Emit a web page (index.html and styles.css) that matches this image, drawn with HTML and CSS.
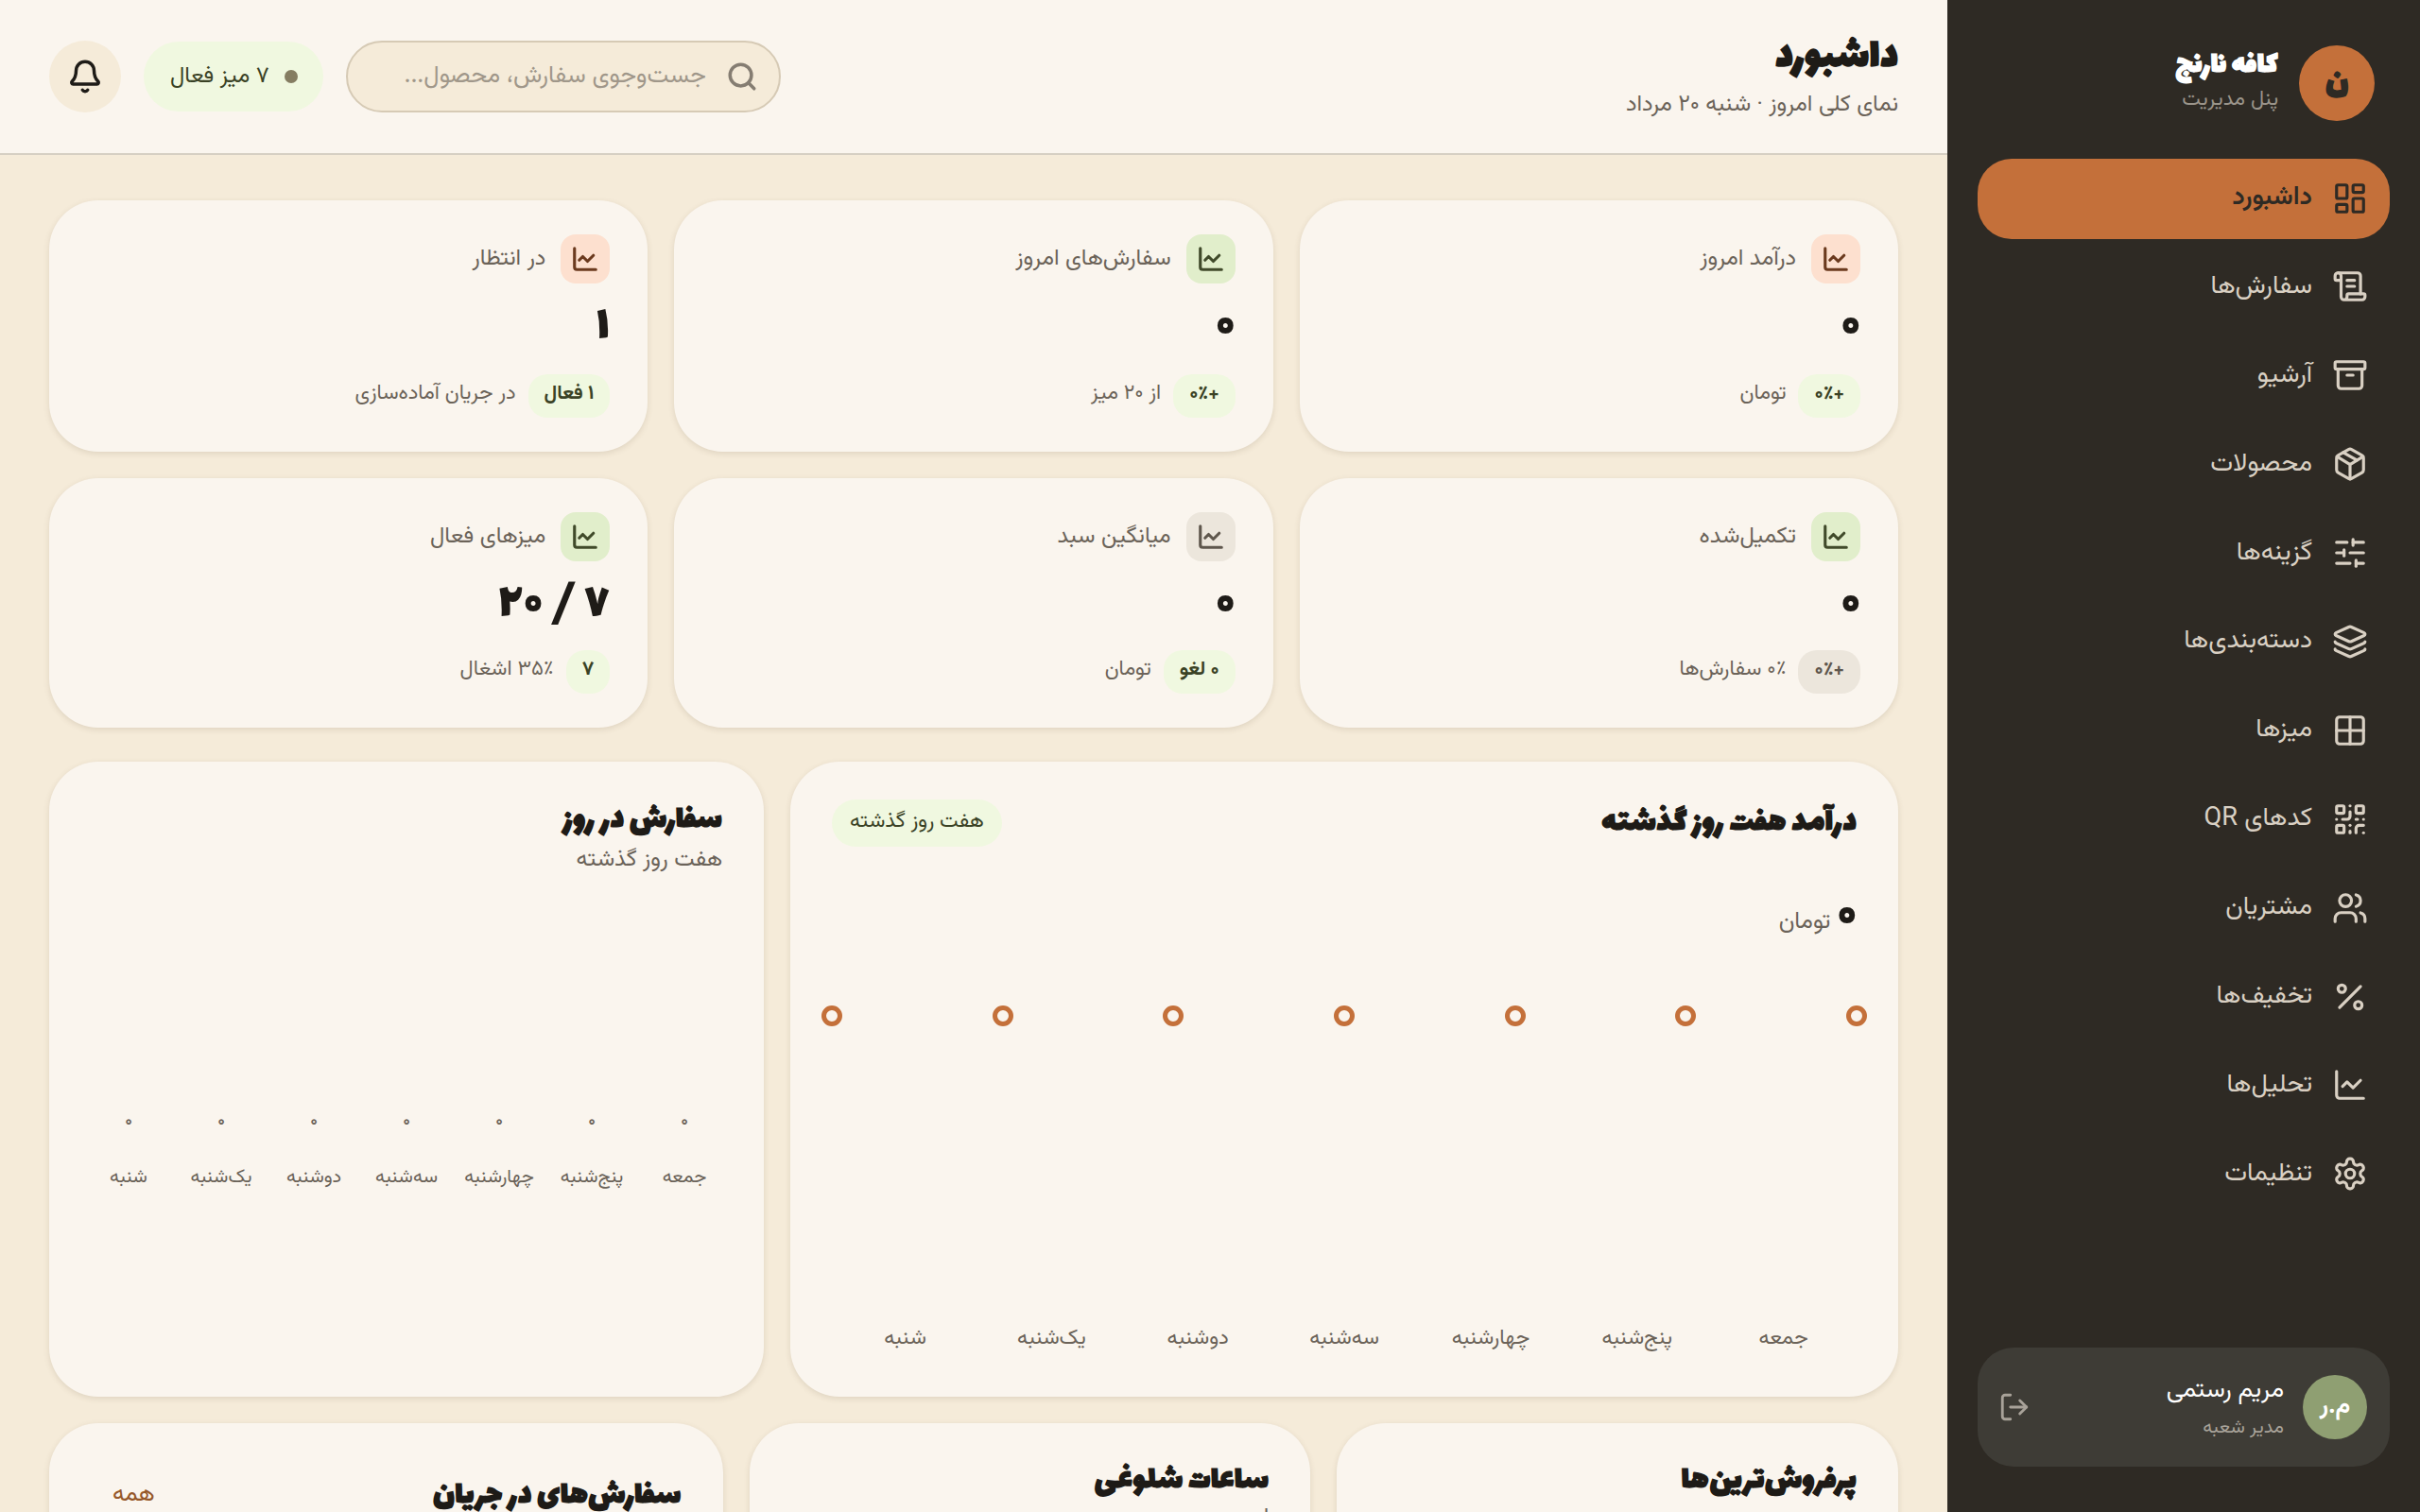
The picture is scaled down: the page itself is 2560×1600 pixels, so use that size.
FILE: index.html
```html
<!DOCTYPE html>
<html lang="fa" dir="rtl">
<head>
<meta charset="utf-8">
<title>داشبورد</title>
<link rel="stylesheet" href="styles.css">
</head>
<body>
<svg class="sprite" aria-hidden="true">
<symbol id="i-dash" viewBox="0 0 24 24"><rect x="3" y="3" width="7" height="9" rx="1"/><rect x="14" y="3" width="7" height="5" rx="1"/><rect x="14" y="12" width="7" height="9" rx="1"/><rect x="3" y="16" width="7" height="5" rx="1"/></symbol>
<symbol id="i-scroll" viewBox="0 0 24 24"><path d="M15 12h-5"/><path d="M15 8h-5"/><path d="M19 17V5a2 2 0 0 0-2-2H4"/><path d="M8 21h12a2 2 0 0 0 2-2v-1a1 1 0 0 0-1-1H11a1 1 0 0 0-1 1v1a2 2 0 1 1-4 0V5a2 2 0 1 0-4 0v2a1 1 0 0 0 1 1h3"/></symbol>
<symbol id="i-archive" viewBox="0 0 24 24"><rect x="2" y="3" width="20" height="5" rx="1"/><path d="M4 8v11a2 2 0 0 0 2 2h12a2 2 0 0 0 2-2V8"/><path d="M10 12h4"/></symbol>
<symbol id="i-package" viewBox="0 0 24 24"><path d="M11 21.73a2 2 0 0 0 2 0l7-4A2 2 0 0 0 21 16V8a2 2 0 0 0-1-1.73l-7-4a2 2 0 0 0-2 0l-7 4A2 2 0 0 0 3 8v8a2 2 0 0 0 1 1.73z"/><path d="M12 22V12"/><path d="m3.3 7 7.703 4.734a2 2 0 0 0 1.994 0L20.7 7"/><path d="m7.5 4.27 9 5.15"/></symbol>
<symbol id="i-sliders" viewBox="0 0 24 24"><path d="M10 5H3"/><path d="M12 19H3"/><path d="M14 3v4"/><path d="M16 17v4"/><path d="M21 12h-9"/><path d="M21 19h-5"/><path d="M21 5h-7"/><path d="M8 10v4"/><path d="M8 12H3"/></symbol>
<symbol id="i-layers" viewBox="0 0 24 24"><path d="M12.83 2.18a2 2 0 0 0-1.66 0L2.6 6.08a1 1 0 0 0 0 1.83l8.58 3.91a2 2 0 0 0 1.66 0l8.58-3.9a1 1 0 0 0 0-1.83z"/><path d="M2 12a1 1 0 0 0 .58.91l8.6 3.91a2 2 0 0 0 1.65 0l8.58-3.9A1 1 0 0 0 22 12"/><path d="M2 17a1 1 0 0 0 .58.91l8.6 3.91a2 2 0 0 0 1.65 0l8.58-3.9A1 1 0 0 0 22 17"/></symbol>
<symbol id="i-grid" viewBox="0 0 24 24"><path d="M12 3v18"/><path d="M3 12h18"/><rect x="3" y="3" width="18" height="18" rx="2"/></symbol>
<symbol id="i-qr" viewBox="0 0 24 24"><rect x="3" y="3" width="5" height="5" rx="1"/><rect x="16" y="3" width="5" height="5" rx="1"/><rect x="3" y="16" width="5" height="5" rx="1"/><path d="M21 16h-3a2 2 0 0 0-2 2v3"/><path d="M21 21v.01"/><path d="M12 7v3a2 2 0 0 1-2 2H7"/><path d="M3 12h.01"/><path d="M12 3h.01"/><path d="M12 16v.01"/><path d="M16 12h1"/><path d="M21 12v.01"/><path d="M12 21v-1"/></symbol>
<symbol id="i-users" viewBox="0 0 24 24"><path d="M16 21v-2a4 4 0 0 0-4-4H6a4 4 0 0 0-4 4v2"/><circle cx="9" cy="7" r="4"/><path d="M22 21v-2a4 4 0 0 0-3-3.87"/><path d="M16 3.13a4 4 0 0 1 0 7.75"/></symbol>
<symbol id="i-percent" viewBox="0 0 24 24"><path d="M19 5 5 19"/><circle cx="6.5" cy="6.5" r="2.5"/><circle cx="17.5" cy="17.5" r="2.5"/></symbol>
<symbol id="i-chart" viewBox="0 0 24 24"><path d="M3 3v16a2 2 0 0 0 2 2h16"/><path d="m19 9-5 5-4-4-3 3"/></symbol>
<symbol id="i-gear" viewBox="0 0 24 24"><path d="M12.22 2h-.44a2 2 0 0 0-2 2v.18a2 2 0 0 1-1 1.73l-.43.25a2 2 0 0 1-2 0l-.15-.08a2 2 0 0 0-2.73.73l-.22.38a2 2 0 0 0 .73 2.73l.15.1a2 2 0 0 1 1 1.72v.51a2 2 0 0 1-1 1.74l-.15.09a2 2 0 0 0-.73 2.73l.22.38a2 2 0 0 0 2.73.73l.15-.08a2 2 0 0 1 2 0l.43.25a2 2 0 0 1 1 1.73V20a2 2 0 0 0 2 2h.44a2 2 0 0 0 2-2v-.18a2 2 0 0 1 1-1.73l.43-.25a2 2 0 0 1 2 0l.15.08a2 2 0 0 0 2.73-.73l.22-.39a2 2 0 0 0-.73-2.73l-.15-.08a2 2 0 0 1-1-1.74v-.5a2 2 0 0 1 1-1.74l.15-.09a2 2 0 0 0 .73-2.73l-.22-.38a2 2 0 0 0-2.73-.73l-.15.08a2 2 0 0 1-2 0l-.43-.25a2 2 0 0 1-1-1.73V4a2 2 0 0 0-2-2z"/><circle cx="12" cy="12" r="3"/></symbol>
<symbol id="i-logout" viewBox="0 0 24 24"><path d="M9 21H5a2 2 0 0 1-2-2V5a2 2 0 0 1 2-2h4"/><path d="m16 17 5-5-5-5"/><path d="M21 12H9"/></symbol>
<symbol id="i-bell" viewBox="0 0 24 24"><path d="M10.268 21a2 2 0 0 0 3.464 0"/><path d="M3.262 15.326A1 1 0 0 0 4 17h16a1 1 0 0 0 .74-1.673C19.41 13.956 18 12.499 18 8A6 6 0 0 0 6 8c0 4.499-1.411 5.956-2.738 7.326"/></symbol>
<symbol id="i-search" viewBox="0 0 24 24"><path d="m21 21-4.34-4.34"/><circle cx="11" cy="11" r="8"/></symbol>
</svg>

<aside class="sidebar">
  <div class="brand">
    <div class="brand-logo">ن</div>
    <div class="brand-text">
      <div class="brand-name">کافه نارنج</div>
      <div class="brand-sub">پنل مدیریت</div>
    </div>
  </div>
  <nav class="nav">
    <a class="nav-item active"><svg class="icon nav-icon"><use href="#i-dash"/></svg><span>داشبورد</span></a>
    <a class="nav-item"><svg class="icon nav-icon"><use href="#i-scroll"/></svg><span>سفارش‌ها</span></a>
    <a class="nav-item"><svg class="icon nav-icon"><use href="#i-archive"/></svg><span>آرشیو</span></a>
    <a class="nav-item"><svg class="icon nav-icon"><use href="#i-package"/></svg><span>محصولات</span></a>
    <a class="nav-item"><svg class="icon nav-icon"><use href="#i-sliders"/></svg><span>گزینه‌ها</span></a>
    <a class="nav-item"><svg class="icon nav-icon"><use href="#i-layers"/></svg><span>دسته‌بندی‌ها</span></a>
    <a class="nav-item"><svg class="icon nav-icon"><use href="#i-grid"/></svg><span>میزها</span></a>
    <a class="nav-item"><svg class="icon nav-icon"><use href="#i-qr"/></svg><span>کدهای QR</span></a>
    <a class="nav-item"><svg class="icon nav-icon"><use href="#i-users"/></svg><span>مشتریان</span></a>
    <a class="nav-item"><svg class="icon nav-icon"><use href="#i-percent"/></svg><span>تخفیف‌ها</span></a>
    <a class="nav-item"><svg class="icon nav-icon"><use href="#i-chart"/></svg><span>تحلیل‌ها</span></a>
    <a class="nav-item"><svg class="icon nav-icon"><use href="#i-gear"/></svg><span>تنظیمات</span></a>
  </nav>
  <div class="user">
    <div class="user-avatar">م.ر</div>
    <div class="user-text">
      <div class="user-name">مریم رستمی</div>
      <div class="user-role">مدیر شعبه</div>
    </div>
    <svg class="icon user-logout"><use href="#i-logout"/></svg>
  </div>
</aside>

<div class="main">
  <header class="topbar">
    <div class="topbar-title">
      <h1>داشبورد</h1>
      <p>نمای کلی امروز · شنبه ۲۰ مرداد</p>
    </div>
    <div class="topbar-tools">
      <div class="search"><svg class="icon search-icon"><use href="#i-search"/></svg><span>جست‌وجوی سفارش، محصول...</span></div>
      <div class="live-pill"><i class="live-dot"></i><span>۷ میز فعال</span></div>
      <div class="bell"><svg class="icon bell-icon"><use href="#i-bell"/></svg></div>
    </div>
  </header>

  <div class="content">
    <section class="kpis">
      <article class="card kpi">
        <div class="kpi-head"><span class="kpi-icon peach"><svg class="icon"><use href="#i-chart"/></svg></span><span>درآمد امروز</span></div>
        <div class="kpi-value">۰</div>
        <div class="kpi-foot"><span class="badge">+۰٪</span><span class="kpi-note">تومان</span></div>
      </article>
      <article class="card kpi">
        <div class="kpi-head"><span class="kpi-icon green"><svg class="icon"><use href="#i-chart"/></svg></span><span>سفارش‌های امروز</span></div>
        <div class="kpi-value">۰</div>
        <div class="kpi-foot"><span class="badge">+۰٪</span><span class="kpi-note">از ۲۰ میز</span></div>
      </article>
      <article class="card kpi">
        <div class="kpi-head"><span class="kpi-icon peach"><svg class="icon"><use href="#i-chart"/></svg></span><span>در انتظار</span></div>
        <div class="kpi-value">۱</div>
        <div class="kpi-foot"><span class="badge">۱ فعال</span><span class="kpi-note">در جریان آماده‌سازی</span></div>
      </article>
      <article class="card kpi">
        <div class="kpi-head"><span class="kpi-icon green"><svg class="icon"><use href="#i-chart"/></svg></span><span>تکمیل‌شده</span></div>
        <div class="kpi-value">۰</div>
        <div class="kpi-foot"><span class="badge muted">+۰٪</span><span class="kpi-note">۰٪ سفارش‌ها</span></div>
      </article>
      <article class="card kpi">
        <div class="kpi-head"><span class="kpi-icon gray"><svg class="icon"><use href="#i-chart"/></svg></span><span>میانگین سبد</span></div>
        <div class="kpi-value">۰</div>
        <div class="kpi-foot"><span class="badge">۰ لغو</span><span class="kpi-note">تومان</span></div>
      </article>
      <article class="card kpi">
        <div class="kpi-head"><span class="kpi-icon green"><svg class="icon"><use href="#i-chart"/></svg></span><span>میزهای فعال</span></div>
        <div class="kpi-value">۷ / ۲۰</div>
        <div class="kpi-foot"><span class="badge">۷</span><span class="kpi-note">۳۵٪ اشغال</span></div>
      </article>
    </section>

    <section class="charts">
      <article class="card chart revenue">
        <div class="chart-head">
          <h2>درآمد هفت روز گذشته</h2>
          <span class="range-pill">هفت روز گذشته</span>
        </div>
        <div class="revenue-total"><b>۰</b><span>تومان</span></div>
        <div class="dots"><i></i><i></i><i></i><i></i><i></i><i></i><i></i></div>
        <div class="rev-days"><span>جمعه</span><span>پنج‌شنبه</span><span>چهارشنبه</span><span>سه‌شنبه</span><span>دوشنبه</span><span>یک‌شنبه</span><span>شنبه</span></div>
      </article>
      <article class="card chart orders">
        <h2>سفارش در روز</h2>
        <p class="chart-sub">هفت روز گذشته</p>
        <div class="bars">
          <div class="bar"><small>۰</small><span>جمعه</span></div>
          <div class="bar"><small>۰</small><span>پنج‌شنبه</span></div>
          <div class="bar"><small>۰</small><span>چهارشنبه</span></div>
          <div class="bar"><small>۰</small><span>سه‌شنبه</span></div>
          <div class="bar"><small>۰</small><span>دوشنبه</span></div>
          <div class="bar"><small>۰</small><span>یک‌شنبه</span></div>
          <div class="bar"><small>۰</small><span>شنبه</span></div>
        </div>
      </article>
    </section>

    <section class="lower">
      <article class="card panel">
        <h2>پرفروش‌ترین‌ها</h2>
      </article>
      <article class="card panel">
        <h2>ساعات شلوغی</h2>
        <p class="panel-sub">امروز</p>
      </article>
      <article class="card panel panel-live">
        <div class="panel-head"><h2>سفارش‌های در جریان</h2><a class="panel-link">همه</a></div>
      </article>
    </section>
  </div>
</div>
</body>
</html>
```

FILE: styles.css
```css
* { box-sizing: border-box; }
html, body { height: 100%; margin: 0; }
body {
  display: flex;
  height: 1600px;
  overflow: hidden;
  background: #f5ebd9;
  color: #1e1b17;
  font-family: Vazirmatn, "Noto Sans Arabic", "DejaVu Sans", sans-serif;
  font-size: 24px;
}
h1, h2, p { margin: 0; }
.sprite { position: absolute; width: 0; height: 0; }
.icon {
  width: 30px;
  height: 30px;
  fill: none;
  stroke: currentColor;
  stroke-width: 2.5;
  stroke-linecap: round;
  stroke-linejoin: round;
  flex: none;
}

/* sidebar */
.sidebar {
  width: 500px;
  flex: none;
  height: 1600px;
  background: #2e2a24;
  color: #d9d0c3;
  padding: 48px 32px;
  display: flex;
  flex-direction: column;
}
.brand { display: flex; align-items: center; gap: 22px; padding: 0 16px; margin-bottom: 40px; }
.brand-logo {
  width: 80px; height: 80px; border-radius: 50%;
  background: #c4703a; color: #2e2a24;
  display: flex; align-items: center; justify-content: center;
  font-family: Lalezar, Vazirmatn, sans-serif; font-size: 38px; font-weight: 700;
}
.brand-text { margin-bottom: 4px; }
.brand-name { color: #fff; font-family: Lalezar, Vazirmatn, sans-serif; font-size: 33.6px; font-weight: 700; line-height: 36px; }
.brand-sub { color: #9a948a; font-size: 22px; line-height: 28px; margin-top: 4px; }
.nav { display: flex; flex-direction: column; gap: 8.9px; flex: 1; }
.nav-item {
  height: 85px; border-radius: 36px;
  display: flex; align-items: center; gap: 21px;
  padding: 0 23px 2px; font-size: 27.2px;
}
.nav-icon { width: 38px; height: 38px; stroke-width: 2; }
.nav-item.active { background: #c4703a; color: #2e2a24; font-weight: 600; }
.user {
  height: 126px; background: #3e3c36; border-radius: 38px;
  display: flex; align-items: center; gap: 20px; padding: 0 24px 0 22px;
}
.user-avatar {
  width: 68px; height: 68px; border-radius: 50%; background: #8f9f72; color: #fff;
  display: flex; align-items: center; justify-content: center;
  font-size: 25.6px; font-weight: 700; flex: none;
}
.user-text { flex: 1; }
.user-name { color: #fff; font-size: 26px; line-height: 42px; }
.user-role { color: #a8a299; font-size: 20px; line-height: 32px; margin-top: 2px; }
.user-logout { color: #a8a299; width: 34px; height: 34px; stroke-width: 2; }

/* main */
.main { flex: 1; min-width: 0; display: flex; flex-direction: column; }
.topbar {
  height: 164px; flex: none;
  background: #faf5ee; border-bottom: 2px solid #d6cfc3;
  display: flex; align-items: center; justify-content: space-between;
  padding: 0 52px;
}
.topbar h1 { font-family: Lalezar, Vazirmatn, sans-serif; font-size: 46px; font-weight: 700; line-height: 54px; }
.topbar p { color: #6b6359; font-size: 24px; line-height: 36px; margin-top: 5px; }
.topbar-tools { display: flex; align-items: center; gap: 24px; }
.search {
  width: 460px; height: 76px; border-radius: 38px;
  background: #f5ebd9; border: 2px solid #d6cab5; color: #a0978a;
  display: flex; align-items: center; gap: 21px; padding: 0 22px; font-size: 25.6px;
}
.search-icon { color: #857d72; width: 34px; height: 34px; stroke-width: 2.5; }
.live-pill {
  height: 74px; border-radius: 37px; padding: 0 27px 0 28px;
  background: #f0f8e0; color: #3a4225;
  display: flex; align-items: center; gap: 16px; font-size: 24px;
}
.live-dot { width: 14px; height: 14px; border-radius: 50%; background: #857d62; }
.bell {
  width: 76px; height: 76px; border-radius: 50%; background: #f5ebd9;
  display: flex; align-items: center; justify-content: center;
}
.bell-icon { width: 38px; height: 38px; stroke-width: 2.2; }

.content { padding: 48px 52px; display: flex; flex-direction: column; gap: 28px; }
.card {
  background: #faf5ee; border-radius: 52px;
  box-shadow: 0 2px 6px rgba(90, 70, 40, .14);
}
.kpis { display: grid; grid-template-columns: repeat(3, 1fr); grid-template-rows: 266px 264px; gap: 28px; }
.kpi { padding: 36px 40px; display: flex; flex-direction: column; }
.kpi-head { display: flex; align-items: center; gap: 16px; color: #6b6359; font-size: 24px; }
.kpi-icon {
  width: 52px; height: 52px; border-radius: 16px;
  display: flex; align-items: center; justify-content: center;
}
.peach { background: #fde0cf; color: #6b3a1e; }
.green { background: #e1eecb; color: #404a2a; }
.gray { background: #ece6dc; color: #5f574d; }
.kpi-value { font-family: Lalezar, Vazirmatn, sans-serif; font-size: 54.4px; font-weight: 400; line-height: 70px; margin-top: 13px; }
.kpi-foot { display: flex; align-items: center; gap: 13px; color: #6b6359; font-size: 22px; margin-top: auto; }
.kpi-note { padding-bottom: 6px; }
.badge {
  height: 46px; border-radius: 20px; padding: 0 17px 4px;
  background: #f0f8e0; color: #3a4225; font-weight: 700; font-size: 20.8px;
  display: flex; align-items: center;
}
.badge.muted { background: #ece6dc; color: #5f574d; }

.charts { display: grid; grid-template-columns: 1.55fr 1fr; gap: 28px; margin-top: 8px; }
.chart { height: 672px; padding: 40px 44px; }
.chart h2, .panel h2 { font-family: Lalezar, Vazirmatn, sans-serif; font-size: 35.84px; font-weight: 700; line-height: 44px; }
.chart-sub { color: #6b6359; font-size: 24px; line-height: 34px; margin-top: 3px; }
.chart-head { display: flex; align-items: center; justify-content: space-between; }
.range-pill {
  height: 50px; border-radius: 25px; padding: 0 19px 4px;
  background: #f0f8e0; color: #3a4225; font-size: 22px;
  display: flex; align-items: center;
}
.revenue-total { display: flex; align-items: baseline; gap: 7px; margin-top: 58px; color: #6b6359; font-size: 24.6px; line-height: 36px; }
.revenue-total b { color: #1e1b17; font-family: Lalezar, Vazirmatn, sans-serif; font-size: 54.4px; font-weight: 400; }
.dots { display: flex; justify-content: space-between; margin: 70px -11px 0; }
.dots i { width: 22px; height: 22px; border-radius: 50%; border: 5px solid #c4703a; background: #faf5ee; }
.rev-days { display: flex; margin-top: 313px; color: #6b6359; font-size: 22.4px; }
.rev-days span { flex: 1; text-align: center; }
.bars { display: flex; margin: 246px -9px 0; }
.bar { flex: 1; display: flex; flex-direction: column; align-items: center; gap: 30px; color: #6b6359; font-size: 20px; }
.bar small { font-size: 17.6px; font-weight: 600; }

.lower { display: grid; grid-template-columns: 1fr 1fr 1.2fr; gap: 28px; }
.panel { height: 300px; padding: 39px 44px; }
.panel-sub { color: #6b6359; font-size: 24px; line-height: 34px; }
.panel-head { display: flex; justify-content: space-between; align-items: center; padding-top: 16px; }
.panel-link { color: #96582a; font-size: 25px; padding: 0 23px 4px; }
```
